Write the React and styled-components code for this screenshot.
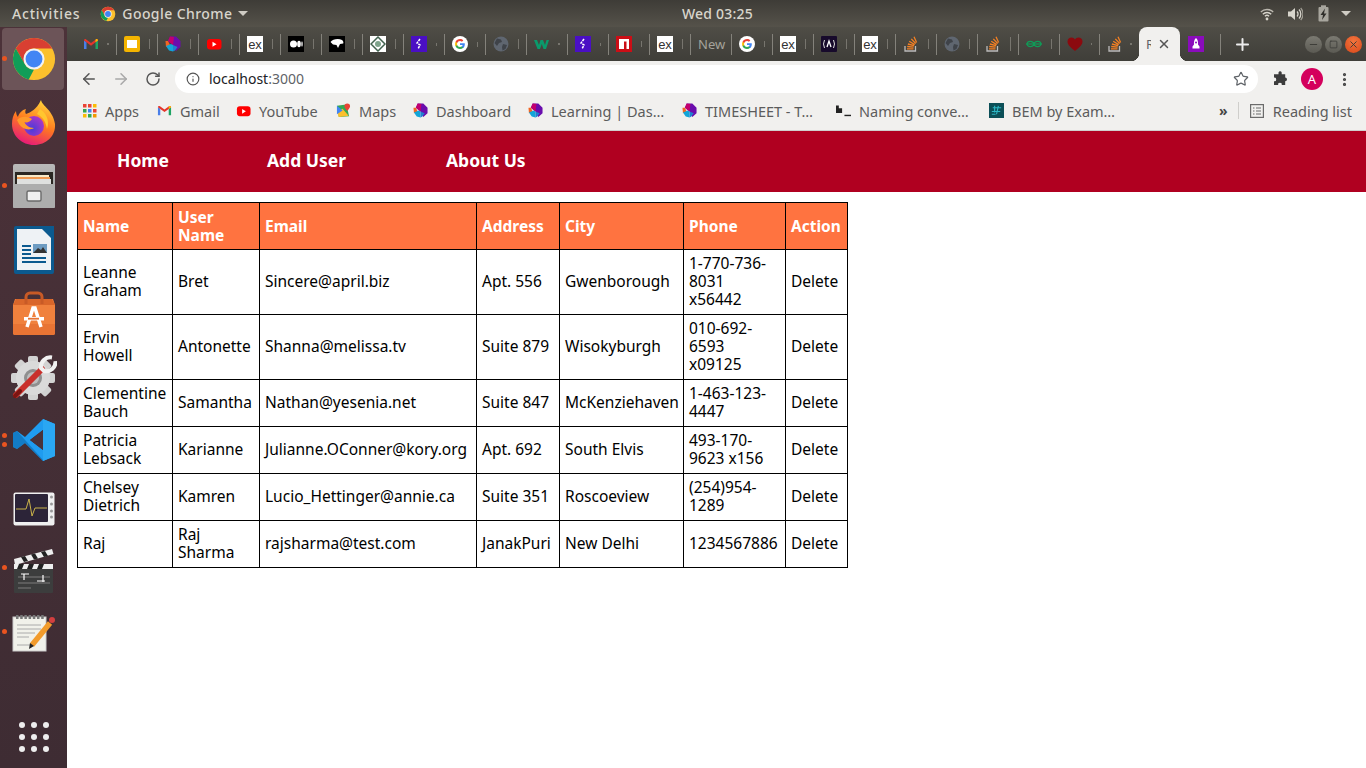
import * as React from 'react';
import styled, {createGlobalStyle} from 'styled-components';
import {ArrowLeft, ArrowRight, RotateCw, Info, Star, MoreVertical, X, Plus, Minus, Square} from 'lucide-react';

const GlobalStyle = createGlobalStyle`
  html, body { margin: 0; padding: 0; background: #fff; }
  body { font-family: "Noto Sans", "Liberation Sans", sans-serif; }
  * { box-sizing: border-box; }
`;

const ChromeLogo = ({size = 16}) => (
    <svg width={size} height={size} viewBox="0 0 48 48">
        <circle cx="24" cy="24" r="22" fill="#fbc02d"/>
        <path d="M5 13A22 22 0 0 1 43 13H24a11 11 0 0 0-9.5 5.5z M5 13l9.5 16.5L24 24z" fill="#d93f32"/>
        <path d="M5 13l9.5 16.5A11 11 0 0 0 24 35l-5.5 10.3A22 22 0 0 1 5 13z" fill="#109d58"/>
        <circle cx="24" cy="24" r="11" fill="#f3f3f3"/>
        <circle cx="24" cy="24" r="8.8" fill="#4285f4"/>
    </svg>
);

const GoogleG = () => (
    <svg width="16" height="16" viewBox="0 0 16 16">
        <circle cx="8" cy="8" r="8" fill="#fff"/>
        <path d="M12.8 8.2c0-.4 0-.7-.1-1H8v1.9h2.7c-.1.6-.5 1.2-1 1.5v1.3h1.6c1-.9 1.5-2.200 1.500-3.700z" fill="#4285f4"/>
        <path d="M8 13c1.300 0 2.400-.4 3.300-1.200l-1.600-1.300c-.4.3-1 .5-1.700.5-1.300 0-2.400-.9-2.800-2H3.600v1.300C4.400 12 6 13 8 13z" fill="#34a853"/>
        <path d="M5.200 9c-.2-.6-.2-1.300 0-1.900V5.800H3.600c-.7 1.400-.7 3 0 4.400z" fill="#fbbc05"/>
        <path d="M8 5.100c.7 0 1.400.3 1.900.7l1.400-1.400C10.500 3.500 9.300 3 8 3 6 3 4.400 4 3.600 5.800l1.600 1.300c.4-1.200 1.500-2 2.800-2z" fill="#ea4335"/>
    </svg>
);

const Gmail = ({size = 16}) => (
    <svg width={size} height={size} viewBox="0 0 16 16">
        <path d="M1 13V4.500L3.500 6v7z" fill="#4a7ee8"/>
        <path d="M12.500 13V6L15 4.500V13z" fill="#1fa463"/>
        <path d="M1 4.500c0-1.200 1.300-1.800 2.200-1.100L8 7l4.800-3.600c.9-.7 2.200-.1 2.200 1.100L12.500 6.300 8 9.700 3.500 6.300z" fill="#e5352b"/>
        <path d="M12.500 6.300L15 4.500c0-1.200-1.300-1.800-2.200-1.100l-.3.200z" fill="#f9bb06"/>
    </svg>
);

const Dash = ({size = 16}) => (
    <svg width={size} height={size} viewBox="0 0 16 16">
        <path d="M5 .5L11 .5 15.500 5 15.500 11 11 15 8 9 3 5z" fill="#6a0dad"/>
        <path d="M5 .5L9 1 8 9 3 5z" fill="#c2006e"/>
        <path d="M.5 5L3 5 5 9 1 11z" fill="#f26522"/>
        <path d="M1 10L6 8 8 9 8 15.500 4 14.500z" fill="#12a5d8"/>
        <path d="M8 9L12.500 11 10 14.500 8 15.500z" fill="#1f7fd0"/>
    </svg>
);

const YouTube = () => (
    <svg width="16" height="16" viewBox="0 0 16 16">
        <rect x="1" y="3" width="14.500" height="10.500" rx="3" fill="#f00"/>
        <path d="M6.500 5.800v5l4-2.500z" fill="#fff"/>
    </svg>
);

const StackOverflow = () => (
    <svg width="16" height="16" viewBox="0 0 16 16" fill="none">
        <path d="M2 10v5h10.500v-5" stroke="#bcbbbb" strokeWidth="1.300"/>
        <path d="M4 12.800h6.500M4.200 10.500l6.400.6M4.900 8l6.200 1.700M6.200 5.300l5.500 3.300M8.300 2.900l4.400 4.600M11 .8l2.600 5.800" stroke="#f48024" strokeWidth="1.300"/>
    </svg>
);

const Globe = () => (
    <svg width="16" height="16" viewBox="0 0 16 16">
        <circle cx="8" cy="8" r="7.500" fill="#5f6670"/>
        <path d="M4 2.500l4 1 1 2.500-3 1-2 3-2.500-3zM10 8l4 1-1.500 4-3 1.500L9 11z" fill="#3f4349"/>
    </svg>
);

const Favicon = ({kind}) => {
    switch (kind) {
        case 'gmail': return <Gmail/>;
        case 'slides': return (
            <svg width="16" height="16" viewBox="0 0 16 16">
                <rect width="16" height="16" rx="2" fill="#f4b400"/>
                <rect x="3" y="4" width="10" height="8" fill="#fff"/>
            </svg>
        );
        case 'dash': return <Dash/>;
        case 'yt': return <YouTube/>;
        case 'ex': return (
            <svg width="16" height="16" viewBox="0 0 16 16">
                <rect width="16" height="16" fill="#fff"/>
                <text x="8" y="12.500" textAnchor="middle" fontSize="13" fontFamily="Liberation Sans" fill="#333">ex</text>
            </svg>
        );
        case 'medium': return (
            <svg width="16" height="16" viewBox="0 0 16 16">
                <rect width="16" height="16" fill="#000"/>
                <ellipse cx="5.500" cy="8" rx="3.500" ry="3.500" fill="#fff"/>
                <ellipse cx="11" cy="8" rx="1.800" ry="3.200" fill="#fff"/>
                <ellipse cx="14" cy="8" rx=".7" ry="2.800" fill="#fff"/>
            </svg>
        );
        case 'bird': return (
            <svg width="16" height="16" viewBox="0 0 16 16">
                <rect width="16" height="16" fill="#000"/>
                <path d="M1.500 6c2-3 8-4 11.500-2 1.200.8 1.800 2.500 1.200 3.500L11 8 9 12 7.500 9 4 8.500z" fill="#fff"/>
            </svg>
        );
        case 'diamond': return (
            <svg width="16" height="16" viewBox="0 0 16 16">
                <rect width="16" height="16" fill="#fff"/>
                <path d="M8 1l7 7-7 7-7-7z" fill="none" stroke="#42624f" strokeWidth="1.500"/>
                <circle cx="8" cy="8" r="3" fill="#7fa48c"/>
            </svg>
        );
        case 'purple': return (
            <svg width="16" height="16" viewBox="0 0 16 16">
                <rect width="16" height="16" fill="#4a0fc4"/>
                <path d="M9 3L6 7l3 2-2 4" fill="none" stroke="#fff" strokeWidth="1.500" strokeDasharray="2.500 .8"/>
            </svg>
        );
        case 'google': return <GoogleG/>;
        case 'globe': return <Globe/>;
        case 'w': return (
            <svg width="16" height="16" viewBox="0 0 16 16">
                <path d="M0 4h3l2 5 1.500-5h2.500L11 9l1.500-5H15l-3 9H9.500L7.800 8 6 13H3.500z" fill="#0a9a6b"/>
            </svg>
        );
        case 'npm': return (
            <svg width="16" height="16" viewBox="0 0 16 16">
                <rect width="16" height="16" fill="#cb0e16"/>
                <path d="M3 3h10v10h-2.500V5.500H8V13H3z" fill="#fff"/>
            </svg>
        );
        case 'a': return (
            <svg width="16" height="16" viewBox="0 0 16 16">
                <rect width="16" height="16" rx="1" fill="#170a2b"/>
                <path d="M6 11l2-6 2 6" fill="none" stroke="#fff" strokeWidth="1.300"/>
                <path d="M3.500 4Q1.500 8 3.500 12M12.500 4q2 4 0 8" fill="none" stroke="#ddd" strokeWidth="1"/>
            </svg>
        );
        case 'so': return <StackOverflow/>;
        case 'gg': return (
            <svg width="16" height="16" viewBox="0 0 16 16" fill="none" stroke="#0f9d58" strokeWidth="1.200">
                <path d="M0 8h16"/>
                <path d="M8 8C7 4.500 1.500 4.500 1 8c.5 3.500 6 3.500 7 0 1 3.500 6.500 3.500 7 0-.5-3.500-6-3.500-7 0z"/>
            </svg>
        );
        case 'heart': return (
            <svg width="16" height="16" viewBox="0 0 16 16">
                <path d="M8 15C3 11 .5 8.500.5 5.500.5 3 2.500 1.500 4.500 1.500 6 1.500 7.300 2.300 8 3.500 8.700 2.300 10 1.500 11.500 1.500c2 0 4 1.500 4 4 0 3-2.500 5.500-7.500 9.500z" fill="#8b0a0f"/>
            </svg>
        );
        case 'rocket': return (
            <svg width="16" height="16" viewBox="0 0 16 16">
                <rect width="16" height="16" fill="#8a0cbc"/>
                <path d="M8 2c1.800 1.500 2.300 4 2 6.500l1.500 2v2h-7v-2l1.500-2C5.700 6 6.200 3.500 8 2z" fill="#fff"/>
                <circle cx="8" cy="6.500" r="1" fill="#8a0cbc"/>
            </svg>
        );
        default: return null;
    }
};

const WifiIcon = () => (
    <svg width="14" height="14" viewBox="0 0 14 14" fill="none" stroke="#d8d5cc">
        <path d="M.8 5a9 9 0 0 1 12.400 0" strokeWidth="1.300" opacity=".8"/>
        <path d="M2.800 7.200a6 6 0 0 1 8.400 0" strokeWidth="1.300"/>
        <path d="M4.900 9.300a3 3 0 0 1 4.200 0" strokeWidth="1.300"/>
        <circle cx="7" cy="12" r="1.400" fill="#d8d5cc" stroke="none"/>
    </svg>
);

const VolumeIcon = () => (
    <svg width="16" height="16" viewBox="0 0 16 16" fill="none" stroke="#d8d5cc">
        <path d="M1 5.500h3L8 2v12L4 10.500H1z" fill="#d8d5cc" stroke="none"/>
        <path d="M10 5.500a3.500 3.500 0 0 1 0 5M12 3.500a6.500 6.500 0 0 1 0 9" strokeWidth="1.300"/>
        <path d="M13.700 2a9 9 0 0 1 0 12" strokeWidth="1.200" opacity=".6"/>
    </svg>
);

const BatteryIcon = () => (
    <svg width="15" height="17" viewBox="0 0 15 17">
        <rect x="2.500" y="2" width="10" height="14.500" rx="1" fill="#a8a69e"/>
        <rect x="5" y=".3" width="5" height="2" fill="#a8a69e"/>
        <path d="M9 3.500L4.500 10H7l-1 5 4.500-6.500H8z" fill="#2f2e2a"/>
    </svg>
);

const Puzzle = () => (
    <svg width="16" height="16" viewBox="0 0 16 16">
        <path d="M6.500 1.500a1.700 1.700 0 0 1 3.200 0V3.300h3.500v3.300a1.800 1.800 0 1 1 0 3.600V14H9.700a1.800 1.800 0 1 0-3.500 0H2V10.200a1.800 1.800 0 1 0 0-3.500V3.300h4.500z" fill="#3c3c3c"/>
    </svg>
);

const AppsGrid = () => (
    <svg width="14" height="14" viewBox="0 0 14 14">
        {[['#ea4335', '#ea4335', '#fbbc05'], ['#34a853', '#4285f4', '#ea4335'], ['#fbbc05', '#34a853', '#f29900']].map((row, r) =>
            row.map((c, i) => <rect key={r + '-' + i} x={i * 5} y={r * 5} width="3.500" height="3.500" fill={c}/>)
        )}
    </svg>
);

const MapsIcon = () => (
    <svg width="15" height="15" viewBox="0 0 16 16">
        <path d="M1 3l10-1.500L14 14 3 15z" fill="#34a853"/>
        <path d="M1 9l6-3 6.500 7.500L3 15z" fill="#fbc02d"/>
        <path d="M1 3l6 5-6 4z" fill="#4285f4"/>
        <path d="M12 .5a3 3 0 0 1 3 3c0 2-3 5-3 5s-3-3-3-5a3 3 0 0 1 3-3z" fill="#ea4335"/>
    </svg>
);

const NamingIcon = () => (
    <svg width="15" height="12" viewBox="0 0 16 12">
        <path d="M0 0h3v3h3.500v5H0z" fill="#222"/>
        <rect x="9" y="10" width="7" height="1.500" fill="#222"/>
    </svg>
);

const BemIcon = () => (
    <svg width="15" height="15" viewBox="0 0 16 16">
        <rect width="16" height="16" fill="#0c4f57"/>
        <path d="M3 9h9M4 5h9M6 3v7M10 3l-2 9M3 12h4" stroke="#2bb6c4" strokeWidth="1.200" fill="none"/>
    </svg>
);

const ReadingIcon = () => (
    <svg width="14" height="14" viewBox="0 0 14 14" fill="none" stroke="#6b6b6b" strokeWidth="1.200">
        <rect x=".6" y=".6" width="12.800" height="12.800"/>
        <path d="M3 4h1.500M6 4h5M3 7h1.500M6 7h5M3 10h1.500M6 10h5"/>
    </svg>
);

const Firefox = () => (
    <svg width="46" height="48" viewBox="0 0 46 48">
        <defs>
            <linearGradient id="ff" x1="0.700" y1="0" x2="0.300" y2="1">
                <stop offset="0" stopColor="#ffd53a"/>
                <stop offset=".5" stopColor="#ff7a1f"/>
                <stop offset="1" stopColor="#e6157d"/>
            </linearGradient>
            <radialGradient id="ffp" cx=".4" cy=".65" r=".65">
                <stop offset="0" stopColor="#4a3bd8"/>
                <stop offset="1" stopColor="#a837c8"/>
            </radialGradient>
        </defs>
        <path d="M30 2c1 6 12 10 14 24 1 12-9 21-21 21C11 47 1 38 1 26c0-5 1-9 4-13 0 3 1 5 2 6 1-4 4-7 8-8-1 2-1 4 0 5 5-2 10-4 15-14z" fill="url(#ff)"/>
        <circle cx="23" cy="28" r="10" fill="url(#ffp)"/>
        <path d="M6 22c4-4 10-4 15-1-2 3-5 4-8 3 2 3 5 6 10 6-5 3-12 1-15-4z" fill="#ff9a2b"/>
        <path d="M29 11c6 4 10 11 7 20-1-7-4-12-10-15z" fill="#ffc62f"/>
    </svg>
);

const FileCabinet = () => (
    <svg width="42" height="44" viewBox="0 0 42 44">
        <defs>
            <linearGradient id="cab" x1="0" y1="0" x2="0" y2="1">
                <stop offset="0" stopColor="#b9b9b9"/>
                <stop offset="1" stopColor="#9a9a9a"/>
            </linearGradient>
        </defs>
        <rect x="0" y="0" width="42" height="44" rx="2" fill="url(#cab)"/>
        <rect x="2" y="8" width="38" height="14" fill="#2a2622"/>
        <rect x="4" y="11" width="32" height="2" fill="#f6e9c8"/>
        <rect x="4" y="13" width="33" height="2" fill="#ef9a52"/>
        <rect x="4" y="15" width="34" height="5" fill="#dfe0df"/>
        <rect x="0" y="20" width="42" height="24" rx="1" fill="#adadad"/>
        <rect x="14" y="27" width="14" height="10" rx="1.500" fill="#f0f0f0" stroke="#6a6a6a" strokeWidth="1.400"/>
    </svg>
);

const Writer = () => (
    <svg width="40" height="48" viewBox="0 0 40 48">
        <path d="M0 2a2 2 0 0 1 2-2h38v46a2 2 0 0 1-2 2H2a2 2 0 0 1-2-2z" fill="#0b5a8f"/>
        <path d="M3 3h25l9 9v32H3z" fill="#eef2f5"/>
        <path d="M29 0l11 0 0 11z" fill="#0b5a8f"/>
        <rect x="19" y="18" width="14" height="9" fill="#6d9cc2"/>
        <path d="M19 27l5-5 3 2 2-3 4 6z" fill="#333"/>
        <path d="M8 20h9M8 24h9M8 28h9M8 32h24M8 36h24" stroke="#0b5a8f" strokeWidth="1.800"/>
    </svg>
);

const AppStore = () => (
    <svg width="42" height="44" viewBox="0 0 42 44">
        <path d="M2 8h38l2 6v28a2 2 0 0 1-2 2H2a2 2 0 0 1-2-2V14z" fill="#f0813d"/>
        <path d="M0 14l3-6h36l3 6z" fill="#d9662a"/>
        <path d="M0 33h42v9a2 2 0 0 1-2 2H2a2 2 0 0 1-2-2z" fill="#e87434"/>
        <path d="M13 13V6a4 4 0 0 1 4-4h8a4 4 0 0 1 4 4v7" fill="none" stroke="#c85a26" strokeWidth="3"/>
        <path d="M14 36l6-19h2l6 19" fill="none" stroke="#fff" strokeWidth="3.500"/>
        <rect x="11" y="26" width="20" height="3.500" fill="#fff"/>
        <rect x="15" y="26.800" width="11" height="1.800" fill="#e87434"/>
    </svg>
);

const Settings = () => (
    <svg width="46" height="46" viewBox="0 0 46 46">
        <g transform="translate(22 24)">
            {[0, 45, 90, 135].map((a) => <rect key={a} x="-5" y="-22" width="10" height="44" rx="2" fill="#d2d2d2" transform={`rotate(${a})`}/>)}
            <circle r="17" fill="#dadada"/>
            <circle r="9" fill="#8f8f8f"/>
            <circle r="6" fill="#bdbdbd"/>
        </g>
        <path d="M5 41L31 15" stroke="#c9302c" strokeWidth="6" strokeLinecap="round"/>
        <path d="M4 42l5-5" stroke="#7a1512" strokeWidth="4" strokeLinecap="round"/>
        <path d="M41 3.500a9.500 9.500 0 0 0-11 10.500l3 3a9.500 9.500 0 0 0 11.500-10" fill="none" stroke="#f1f1f1" strokeWidth="4"/>
    </svg>
);

const VSCode = () => (
    <svg width="42" height="42" viewBox="0 0 42 42">
        <path d="M30 0L12 18 4 12 0 14v14l4 2 8-6 18 18 12-5V5zm0 11v20L17 21z" fill="#1f9cf0"/>
        <path d="M30 0l12 5v32l-12 5z" fill="#2aa7f3"/>
        <path d="M30 11v20L17 21z" fill="#4a3239"/>
        <path d="M0 14l4-2 26 29v1L12 24l-8 6-4-2z" fill="#0e6fb3" opacity=".7"/>
    </svg>
);

const SysMon = () => (
    <svg width="42" height="34" viewBox="0 0 42 34">
        <rect x=".5" y=".5" width="41" height="33" rx="2" fill="#f0f0f0"/>
        <rect x="2" y="2" width="33" height="28" rx="1" fill="#2c2438"/>
        <path d="M3 17h10l3-10 3 17 3-8h12" fill="none" stroke="#c9b24a" strokeWidth="1"/>
        {[5, 12, 19, 25].map((y) => <circle key={y} cx="38.500" cy={y} r="1.500" fill="#999"/>)}
    </svg>
);

const Clapper = () => (
    <svg width="42" height="46" viewBox="0 0 42 46">
        <path d="M1 11L39 1l1.500 5L2 17z" fill="#eee"/>
        <path d="M8 9l4-1 3 5-4 1zM18 6.500l4-1 3 5-4 1zM28 4l4-1 3 5-4 1z" fill="#222"/>
        <rect x="1" y="16" width="39" height="29" rx="1" fill="#3c3d3d"/>
        <rect x="1" y="16" width="39" height="5" fill="#eee"/>
        <path d="M6 16h5l-2 5H4zM16 16h5l-2 5h-5zM26 16h5l-2 5h-5z" fill="#222"/>
        <path d="M5 29h32M5 35h32M5 40h13" stroke="#999" strokeWidth=".7"/>
        <path d="M8 26h8M11 26v6M24 33h8M30 27v7" stroke="#fff" strokeWidth="1.200"/>
    </svg>
);

const Editor = () => (
    <svg width="44" height="38" viewBox="0 0 44 38">
        <rect x="1" y="3" width="33" height="34" fill="#f1f1ea" stroke="#ccc"/>
        <path d="M5 11h24M5 15h24M5 19h18M5 23h12M5 31h15" stroke="#aaa" strokeWidth="1"/>
        <path d="M4 3h28" stroke="#777" strokeWidth="4" strokeDasharray="2.500 1.700"/>
        <path d="M20 31L38 9" stroke="#f29b2b" strokeWidth="5.500"/>
        <path d="M17 35l1-6 4 3z" fill="#222"/>
        <circle cx="40" cy="6" r="3" fill="#d23f3f"/>
    </svg>
);

const Page = styled.div`
  width: 1366px;
  height: 768px;
  overflow: hidden;
  display: flex;
  flex-direction: column;
`;

const TopBar = styled.div`
  height: 27px;
  flex: none;
  display: grid;
  grid-template-columns: 682px auto 1fr;
  align-items: center;
  background: linear-gradient(#3e3c37, #55524a);
  color: #d8d5cc;
  font-size: 14px;
  font-weight: 500;
  letter-spacing: .2px;
`;

const TopLeft = styled.div`
  display: flex;
  align-items: center;
  padding-left: 12px;
`;

const Activities = styled.span`
  letter-spacing: .8px;
`;

const AppName = styled.div`
  display: flex;
  align-items: center;
  gap: 6px;
  margin-left: 20px;
  letter-spacing: .42px;
`;

const Caret = styled.span`
  width: 0;
  height: 0;
  border-left: 5px solid transparent;
  border-right: 5px solid transparent;
  border-top: 5px solid #cfccc4;
`;

const StatusCaret = styled(Caret)`
  margin-left: -3px;
`;

const StatusIcons = styled.div`
  display: flex;
  align-items: center;
  justify-content: flex-end;
  gap: 13px;
  padding-right: 15px;
`;

const Main = styled.div`
  flex: 1;
  display: flex;
  min-height: 0;
`;

const Dock = styled.div`
  width: 67px;
  flex: none;
  display: flex;
  flex-direction: column;
  background: linear-gradient(#4c3239, #3e2c33);
`;

const DockItem = styled.div`
  position: relative;
  height: 63.6px;
  flex: none;
  display: flex;
  align-items: center;
  justify-content: center;
  padding-top: ${(p) => p.$pushDown || 0}px;
  &::before {
    content: '';
    display: ${(p) => (p.$active ? 'block' : 'none')};
    position: absolute;
    inset: 1px 3px 1px 2px;
    background: #6c5458;
    border-radius: 4px;
  }
  & > svg { position: relative; }
`;

const RunDot = styled.span`
  position: absolute;
  left: 2px;
  top: ${(p) => p.$top}px;
  width: 5px;
  height: 5px;
  border-radius: 50%;
  background: #e95420;
`;

const AppGridButton = styled.div`
  margin-top: auto;
  margin-bottom: 16px;
  align-self: center;
  display: grid;
  grid-template-columns: repeat(3, 6px);
  gap: 6px;
`;

const AppDot = styled.span`
  width: 6px;
  height: 6px;
  border-radius: 50%;
  background: #eeeeee;
`;

const Browser = styled.div`
  flex: 1;
  min-width: 0;
  display: flex;
  flex-direction: column;
  background: #fff;
`;

const TabStrip = styled.div`
  height: 34px;
  flex: none;
  display: flex;
  padding-left: 8px;
  background: linear-gradient(#4f4d46, #3f3e39);
`;

const Tab = styled.div`
  position: relative;
  width: ${(p) => p.$w || 41}px;
  flex: none;
  display: flex;
  align-items: center;
  padding-left: ${(p) => (p.$active ? 7 : 8)}px;
  color: ${(p) => (p.$active ? '#5f6368' : '#a9a79f')};
  border-radius: ${(p) => (p.$active ? '8px 8px 0 0' : '0')};
  background: ${(p) => (p.$active ? '#f1f0ee' : 'transparent')};
  &::before, &::after {
    content: '';
    display: ${(p) => (p.$active ? 'block' : 'none')};
    position: absolute;
    bottom: 0;
    width: 8px;
    height: 8px;
  }
  &::before { left: -8px; background: radial-gradient(circle at 0 0, transparent 8px, #f1f0ee 8.500px); }
  &::after { right: -8px; background: radial-gradient(circle at 100% 0, transparent 8px, #f1f0ee 8.500px); }
`;

const TabTail = styled.span`
  margin-left: auto;
  margin-right: 7px;
  width: ${(p) => p.$w || 1}px;
  height: ${(p) => p.$h || 10}px;
  background: #77756e;
`;

const TabLabel = styled.span`
  white-space: nowrap;
  font-size: 13px;
  color: #a4a29a;
`;

const TabSep = styled.span`
  width: 1px;
  height: 21px;
  flex: none;
  margin-left: ${(p) => (p.$flush ? 'auto' : '0')};
  margin-right: -1px;
  background: #84827b;
`;

const ActiveTitle = styled.span`
  font-size: 13px;
  width: 5px;
  overflow: hidden;
  margin-right: 6px;
`;

const CloseIcon = styled(X)`
  color: #555;
`;

const NewTab = styled.div`
  display: flex;
  align-items: center;
  margin-left: 13px;
  color: #ececec;
`;

const WindowControls = styled.div`
  margin-left: auto;
  padding-right: 4px;
  display: flex;
  align-items: center;
  gap: 3px;
`;

const WindowButton = styled.span`
  width: 17px;
  height: 17px;
  border-radius: 50%;
  display: flex;
  align-items: center;
  justify-content: center;
  color: #3a3a36;
  background: ${(p) => (p.$close ? 'radial-gradient(circle at 50% 30%, #f3743d, #d9481a)' : 'linear-gradient(#7b7a72, #5b5a53)')};
`;

const Toolbar = styled.div`
  height: 32px;
  flex: none;
  display: flex;
  align-items: flex-end;
  background: #f1f0ee;
  padding-left: 6px;
  padding-right: 13px;
`;

const NavIcon = styled.span`
  width: 32px;
  height: 28px;
  flex: none;
  display: flex;
  align-items: center;
  justify-content: center;
  color: ${(p) => (p.$off ? '#a8a8a8' : '#555')};
`;

const Omnibox = styled.div`
  width: 1083px;
  height: 28px;
  margin-left: 6px;
  flex: none;
  display: flex;
  align-items: center;
  padding: 0 9px 0 11px;
  background: #fff;
  border-radius: 14px;
  color: #555;
`;

const Url = styled.span`
  margin: 0 0 2px 9px;
  font-size: 14px;
  color: #5f6368;
  b { font-weight: 400; color: #202124; }
`;

const OmniStar = styled.span`
  margin-left: auto;
  display: flex;
  color: #5f6368;
`;

const ToolbarEnd = styled.div`
  flex: 1;
  display: flex;
  align-items: center;
  justify-content: space-between;
  height: 28px;
  padding: 0 0 0 14px;
`;

const Avatar = styled.span`
  width: 22px;
  height: 22px;
  border-radius: 50%;
  background: #d4005c;
  color: #fff;
  display: flex;
  align-items: center;
  justify-content: center;
  font-size: 13px;
`;

const Bookmarks = styled.div`
  height: 38px;
  flex: none;
  display: flex;
  align-items: center;
  padding: 0 0 2px 15px;
  background: #f1f0ee;
  border-bottom: 1px solid #d0cfcd;
  font-size: 14.500px;
  color: #5c5c5c;
`;

const Bookmark = styled.div`
  width: ${(p) => p.$w}px;
  flex: none;
  display: flex;
  align-items: center;
  gap: 8px;
  white-space: nowrap;
`;

const BookmarkIcon = styled.span`
  width: 15px;
  flex: none;
  display: flex;
  align-items: center;
  justify-content: center;
`;

const BookmarksEnd = styled.div`
  margin-left: auto;
  padding-right: 14px;
  display: flex;
  align-items: center;
`;

const Chevrons = styled.span`
  font-size: 14px;
  color: #444;
  font-weight: 700;
  margin-right: 10px;
`;

const BarSep = styled.span`
  width: 1px;
  height: 17px;
  margin-right: 11px;
  background: #cfcecb;
`;

const ReadingList = styled.span`
  display: flex;
  align-items: center;
  gap: 9px;
`;

const NavBar = styled.nav`
  height: 61px;
  flex: none;
  display: grid;
  grid-template-columns: 150px 179px auto;
  justify-content: start;
  align-items: center;
  padding: 0 0 4px 50px;
  background: #b00020;
`;

const NavLink = styled.a`
  color: #fff;
  font-size: 17.500px;
  font-weight: 700;
  text-decoration: none;
`;

const UsersTable = styled.table`
  width: 771px;
  margin: 10px 0 0 10px;
  border-collapse: collapse;
  table-layout: fixed;
  font-size: 15.500px;
  line-height: 18px;
  color: #000;
`;

const Col = styled.col`
  width: ${(p) => p.$w}px;
`;

const HeadCell = styled.th`
  padding: 5px;
  border: 1px solid #000;
  background: #ff7340;
  color: #fff;
  font-weight: 700;
  text-align: left;
  white-space: pre-line;
`;

const Cell = styled.td`
  padding: 4px 5px 6px;
  border: 1px solid #000;
  white-space: pre-line;
`;

const columns = [95, 87, 217, 83, 124, 102, 62];
const heads = ['Name', 'User\nName', 'Email', 'Address', 'City', 'Phone', 'Action'];

const users = [
    ['Leanne\nGraham', 'Bret', 'Sincere@april.biz', 'Apt. 556', 'Gwenborough', '1-770-736-\n8031\nx56442'],
    ['Ervin\nHowell', 'Antonette', 'Shanna@melissa.tv', 'Suite 879', 'Wisokyburgh', '010-692-\n6593\nx09125'],
    ['Clementine\nBauch', 'Samantha', 'Nathan@yesenia.net', 'Suite 847', 'McKenziehaven', '1-463-123-\n4447'],
    ['Patricia\nLebsack', 'Karianne', 'Julianne.OConner@kory.org', 'Apt. 692', 'South Elvis', '493-170-\n9623 x156'],
    ['Chelsey\nDietrich', 'Kamren', 'Lucio_Hettinger@annie.ca', 'Suite 351', 'Roscoeview', '(254)954-\n1289'],
    ['Raj', 'Raj\nSharma', 'rajsharma@test.com', 'JanakPuri', 'New Delhi', '1234567886'],
];

const tabs = [
    {kind: 'gmail', tail: {h: 2, w: 2}}, {kind: 'slides', tail: {}}, {kind: 'dash', tail: {}}, {kind: 'yt', tail: {}},
    {kind: 'ex', tail: {}}, {kind: 'medium', tail: {}}, {kind: 'bird', tail: {}}, {kind: 'diamond', tail: {}},
    {kind: 'purple', tail: {h: 3}}, {kind: 'google', tail: {h: 5}}, {kind: 'globe', tail: {}}, {kind: 'w', tail: {h: 2, w: 2}},
    {kind: 'purple', tail: {h: 3}}, {kind: 'npm', tail: {h: 6}}, {kind: 'ex', tail: {}}, {label: 'New'},
    {kind: 'google', tail: {h: 6}}, {kind: 'ex', tail: {}}, {kind: 'a', tail: {}}, {kind: 'ex', tail: {}},
    {kind: 'so', tail: {}}, {kind: 'globe', tail: {}}, {kind: 'so', tail: {h: 14}}, {kind: 'gg', tail: {}},
    {kind: 'heart', tail: {h: 2}, w: 40}, {kind: 'so', tail: {h: 2, w: 2}, w: 40},
];

const dockApps = [
    {icon: <ChromeLogo size={46}/>, active: true, dots: [29]},
    {icon: <Firefox/>},
    {icon: <FileCabinet/>, dots: [29]},
    {icon: <Writer/>},
    {icon: <AppStore/>},
    {icon: <Settings/>},
    {icon: <VSCode/>, dots: [24, 33]},
    {icon: <SysMon/>, pushDown: 10},
    {icon: <Clapper/>, pushDown: 6, dots: [29]},
    {icon: <Editor/>, pushDown: 4, dots: [30]},
];

const bookmarks = [
    {w: 75, icon: <AppsGrid/>, text: 'Apps'},
    {w: 79, icon: <Gmail size={15}/>, text: 'Gmail'},
    {w: 100, icon: <YouTube/>, text: 'YouTube'},
    {w: 77, icon: <MapsIcon/>, text: 'Maps'},
    {w: 115, icon: <Dash size={15}/>, text: 'Dashboard'},
    {w: 154, icon: <Dash size={15}/>, text: 'Learning | Das…'},
    {w: 154, icon: <Dash size={15}/>, text: 'TIMESHEET - T…'},
    {w: 153, icon: <NamingIcon/>, text: 'Naming conve…'},
    {w: 135, icon: <BemIcon/>, text: 'BEM by Exam…'},
];

export default function App() {
    return (
        <Page>
            <GlobalStyle/>
            <TopBar>
                <TopLeft>
                    <Activities>Activities</Activities>
                    <AppName><ChromeLogo/>Google Chrome<Caret/></AppName>
                </TopLeft>
                <div>Wed 03:25</div>
                <StatusIcons>
                    <WifiIcon/>
                    <VolumeIcon/>
                    <BatteryIcon/>
                    <StatusCaret/>
                </StatusIcons>
            </TopBar>
            <Main>
                <Dock>
                    {dockApps.map((app, i) => (
                        <DockItem key={i} $active={app.active} $pushDown={app.pushDown}>
                            {app.icon}
                            {(app.dots || []).map((top) => <RunDot key={top} $top={top}/>)}
                        </DockItem>
                    ))}
                    <AppGridButton>
                        {Array.from({length: 9}).map((_, i) => <AppDot key={i}/>)}
                    </AppGridButton>
                </Dock>
                <Browser>
                    <TabStrip>
                        {tabs.map((tab, i) => (
                            <Tab key={i} $w={tab.w}>
                                {tab.kind ? <Favicon kind={tab.kind}/> : <TabLabel>{tab.label}</TabLabel>}
                                {tab.tail ? <TabTail $w={tab.tail.w} $h={tab.tail.h}/> : null}
                                <TabSep $flush={!tab.tail}/>
                            </Tab>
                        ))}
                        <Tab $active>
                            <ActiveTitle>R</ActiveTitle>
                            <CloseIcon size={14} strokeWidth={2.500}/>
                        </Tab>
                        <Tab $w={40}>
                            <Favicon kind="rocket"/>
                            <TabSep $flush/>
                        </Tab>
                        <NewTab><Plus size={19} strokeWidth={2.500}/></NewTab>
                        <WindowControls>
                            <WindowButton><Minus size={11} strokeWidth={2}/></WindowButton>
                            <WindowButton><Square size={9} strokeWidth={2}/></WindowButton>
                            <WindowButton $close><X size={11} strokeWidth={2}/></WindowButton>
                        </WindowControls>
                    </TabStrip>
                    <Toolbar>
                        <NavIcon><ArrowLeft size={18} strokeWidth={2}/></NavIcon>
                        <NavIcon $off><ArrowRight size={18} strokeWidth={2}/></NavIcon>
                        <NavIcon><RotateCw size={16} strokeWidth={2.200}/></NavIcon>
                        <Omnibox>
                            <Info size={14}/>
                            <Url><b>localhost</b>:3000</Url>
                            <OmniStar><Star size={16} strokeWidth={1.800}/></OmniStar>
                        </Omnibox>
                        <ToolbarEnd>
                            <Puzzle/>
                            <Avatar>A</Avatar>
                            <MoreVertical size={17} strokeWidth={2.500} color="#444"/>
                        </ToolbarEnd>
                    </Toolbar>
                    <Bookmarks>
                        {bookmarks.map((b) => (
                            <Bookmark key={b.text} $w={b.w}><BookmarkIcon>{b.icon}</BookmarkIcon>{b.text}</Bookmark>
                        ))}
                        <BookmarksEnd>
                            <Chevrons>»</Chevrons>
                            <BarSep/>
                            <ReadingList><ReadingIcon/>Reading list</ReadingList>
                        </BookmarksEnd>
                    </Bookmarks>
                    <NavBar>
                        <NavLink>Home</NavLink>
                        <NavLink>Add User</NavLink>
                        <NavLink>About Us</NavLink>
                    </NavBar>
                    <UsersTable>
                        <colgroup>
                            {columns.map((w, i) => <Col key={i} $w={w}/>)}
                        </colgroup>
                        <thead>
                            <tr>
                                {heads.map((h) => <HeadCell key={h}>{h}</HeadCell>)}
                            </tr>
                        </thead>
                        <tbody>
                            {users.map((row) => (
                                <tr key={row[2]}>
                                    {row.map((value, i) => <Cell key={i}>{value}</Cell>)}
                                    <Cell>Delete</Cell>
                                </tr>
                            ))}
                        </tbody>
                    </UsersTable>
                </Browser>
            </Main>
        </Page>
    );
}
